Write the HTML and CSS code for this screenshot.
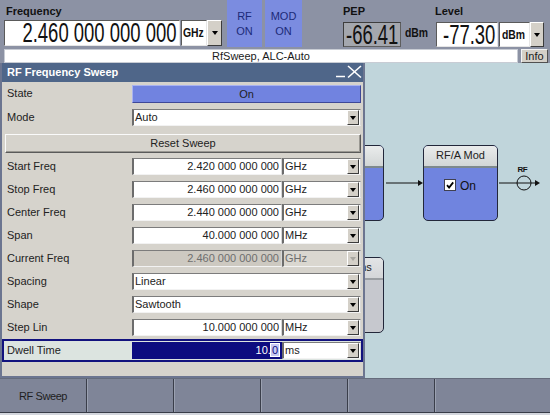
FILE: index.html
```html
<!DOCTYPE html>
<html lang="en">
<head>
<meta charset="utf-8">
<title>RF Frequency Sweep</title>
<link rel="stylesheet" href="styles.css">
</head>
<body>
<div class="screen">
  <div class="head">
    <div class="toprow">
      <div class="grp g-freq">
        <div class="glabel">Frequency</div>
        <div class="entry e-freq">
          <div class="bigbox b-freq"><span class="big">2.460 000 000 000</span></div>
          <div class="ubox u-freq"><span class="cond">GHz</span></div>
          <div class="ddbtn"><i class="tri"></i></div>
        </div>
      </div>
      <div class="onoff rf">RF<br>ON</div>
      <div class="onoff mod">MOD<br>ON</div>
      <div class="grp g-pep">
        <div class="glabel tall">PEP</div>
        <div class="entry e-lvl">
          <div class="bigbox b-pep"><span class="big">-66.41</span></div>
          <span class="cond unit-txt">dBm</span>
        </div>
      </div>
      <div class="grp g-level">
        <div class="glabel tall">Level</div>
        <div class="entry e-lvl">
          <div class="bigbox b-level"><span class="big">-77.30</span></div>
          <div class="ubox u-level"><span class="cond">dBm</span></div>
          <div class="ddbtn"><i class="tri"></i></div>
        </div>
      </div>
    </div>
    <div class="statusrow">
      <div class="statbox">RfSweep, ALC-Auto</div>
      <div class="infobtn">Info</div>
    </div>
  </div>

  <div class="main">
    <div class="diagram">
      <svg class="wires" width="550" height="315" viewBox="0 0 550 315">
        <line x1="386" y1="120" x2="419" y2="120" stroke="#111" stroke-width="1"/>
        <polygon points="418,117 423,120 418,123" fill="#111"/>
        <line x1="499" y1="120" x2="536" y2="120" stroke="#111" stroke-width="1"/>
        <polygon points="535,117 540,120 535,123" fill="#111"/>
        <circle cx="524" cy="120" r="7" fill="none" stroke="#111" stroke-width="1"/>
        <text x="517.5" y="108.5" font-family="Liberation Sans, Arial, sans-serif" font-size="8" font-weight="bold" letter-spacing="-0.6" fill="#111">RF</text>
      </svg>
      <div class="blk blk-a">
        <div class="bhead"></div>
        <div class="bbody"></div>
      </div>
      <div class="blk blk-mod">
        <div class="bhead">RF/A Mod</div>
        <div class="bbody">
          <span class="chk"><svg width="10" height="10" viewBox="0 0 10 10"><path d="M2 5.2 L4.1 7.6 L8.2 2.4" fill="none" stroke="#000" stroke-width="1.8"/></svg></span>
          <span>On</span>
        </div>
      </div>
      <div class="blk blk-b">
        <div class="bhead">Mod Gens</div>
        <div class="bbody"></div>
      </div>
    </div>

    <div class="dialog">
      <div class="dtitle">
        <span>RF Frequency Sweep</span>
        <svg class="wctl" width="28" height="19" viewBox="0 0 28 19">
          <line x1="1" y1="13.5" x2="10" y2="13.5" stroke="#fff" stroke-width="1.5"/>
          <line x1="13" y1="3" x2="26" y2="14.5" stroke="#fff" stroke-width="1.6"/>
          <line x1="26" y1="3" x2="13" y2="14.5" stroke="#fff" stroke-width="1.6"/>
        </svg>
      </div>
      <div class="drows">
        <div class="row r-state"><div class="rl">State</div><div class="onbtn">On</div></div>
        <div class="row"><div class="rl">Mode</div><div class="sel"><span class="st">Auto</span><span class="dd"><i class="tri"></i></span></div></div>
        <div class="row r-reset"><div class="resetbtn">Reset Sweep</div></div>
        <div class="row"><div class="rl">Start Freq</div><div class="fld"><div class="val">2.420 000 000 000</div><div class="usel"><span class="st">GHz</span><span class="dd"><i class="tri"></i></span></div></div></div>
        <div class="row"><div class="rl">Stop Freq</div><div class="fld"><div class="val">2.460 000 000 000</div><div class="usel"><span class="st">GHz</span><span class="dd"><i class="tri"></i></span></div></div></div>
        <div class="row"><div class="rl">Center Freq</div><div class="fld"><div class="val">2.440 000 000 000</div><div class="usel"><span class="st">GHz</span><span class="dd"><i class="tri"></i></span></div></div></div>
        <div class="row"><div class="rl">Span</div><div class="fld"><div class="val">40.000 000 000</div><div class="usel"><span class="st">MHz</span><span class="dd"><i class="tri"></i></span></div></div></div>
        <div class="row"><div class="rl">Current Freq</div><div class="fld dis"><div class="val">2.460 000 000 000</div><div class="usel"><span class="st">GHz</span><span class="dd"><i class="tri"></i></span></div></div></div>
        <div class="row"><div class="rl">Spacing</div><div class="sel"><span class="st">Linear</span><span class="dd"><i class="tri"></i></span></div></div>
        <div class="row"><div class="rl">Shape</div><div class="sel"><span class="st">Sawtooth</span><span class="dd"><i class="tri"></i></span></div></div>
        <div class="row"><div class="rl">Step Lin</div><div class="fld"><div class="val">10.000 000 000</div><div class="usel"><span class="st">MHz</span><span class="dd"><i class="tri"></i></span></div></div></div>
        <div class="row r-active"><div class="rl">Dwell Time</div><div class="fld"><div class="val act">10.<span class="cur">0</span></div><div class="usel"><span class="st">ms</span><span class="dd"><i class="tri"></i></span></div></div></div>
      </div>
    </div>
  </div>

  <div class="softkeys">
    <div class="sk">RF Sweep</div>
    <div class="sk"></div>
    <div class="sk"></div>
    <div class="sk"></div>
    <div class="sk"></div>
    <div class="sk"></div>
  </div>
</div>
</body>
</html>
```

FILE: styles.css
```css
* { box-sizing: border-box; margin: 0; padding: 0; }
html, body { width: 550px; height: 415px; overflow: hidden; background: #d3d6dd; }
body { font-family: "Liberation Sans", Arial, sans-serif; color: #1e1e1e; }

.screen { width: 550px; height: 413px; display: flex; flex-direction: column; }

/* ---------- header ---------- */
.head { height: 63px; background: #8c92a4; display: flex; flex-direction: column; }
.toprow { height: 49px; display: flex; align-items: flex-start; }
.grp { display: flex; flex-direction: column; }
.g-freq { margin-left: 4px; width: 218px; }
.g-pep { margin-left: 41px; width: 92px; }
.g-level { width: 110px; }
.glabel { height: 20px; padding-top: 5px; padding-left: 2px; font-size: 11px; font-weight: bold; line-height: 13px; color: #111; }
.glabel.tall { height: 22px; padding-left: 0; }

.entry { display: flex; align-items: stretch; }
.e-freq { height: 26px; }
.e-lvl { height: 25px; }

.bigbox { display: flex; justify-content: flex-end; align-items: flex-start; overflow: visible; padding-right: 2px;
  background: #fff; border: 1px solid; border-color: #5a5a5a #e6e6e6 #e6e6e6 #5a5a5a; }
.b-freq { width: 176px; }
.b-pep { width: 58px; background: #a4a7ae; border-color: #3e3e3e #5e5e5e #5e5e5e #3e3e3e; }
.b-level { width: 62px; margin-left: 1px; }
.big { flex: none; white-space: nowrap; font-size: 28px; line-height: 24px; color: #111;
  transform: scaleX(0.66); transform-origin: 100% 50%; }

.ubox { background: #fff; border: 1px solid; border-color: #5a5a5a #e6e6e6 #e6e6e6 #5a5a5a; margin-left: 1px; overflow: visible; }
.u-freq { width: 26px; padding-left: 1px; }
.u-level { width: 31px; padding-left: 2px; }
.cond { display: inline-block; font-size: 13px; font-weight: bold; line-height: 24px; color: #111;
  transform: scaleX(0.8); transform-origin: 0 50%; white-space: nowrap; }
.u-level .cond { line-height: 23px; }
.unit-txt { margin-left: 4px; line-height: 21px; }

.ddbtn { width: 15px; background: #d4d0c8; border: 1px solid; border-color: #fff #3c3c3c #3c3c3c #fff;
  display: flex; align-items: center; justify-content: center; }
.g-level .ddbtn { width: 14px; }
.tri { display: block; width: 0; height: 0; border-left: 3px solid transparent; border-right: 3px solid transparent; border-top: 4px solid #000; }

.onoff { height: 47px; background: #7b8ce0; color: #1c2a78; font-size: 11px; line-height: 15px; text-align: center; padding-top: 9px; }
.rf { margin-left: 5px; width: 35px; }
.mod { margin-left: 3px; width: 37px; }

.statusrow { height: 14px; display: flex; padding-left: 4px; }
.statbox { width: 514px; background: #fff; border: 1px solid #c8ccd4; font-size: 11px; line-height: 12px; text-align: center; color: #1a1a1a; }
.infobtn { margin-left: 3px; width: 27px; background: #d4d0c8; border: 1px solid; border-color: #f4f4f4 #505050 #505050 #f4f4f4;
  font-size: 11px; line-height: 12px; text-align: center; color: #1a1a1a; }

/* ---------- main / diagram ---------- */
.main { position: relative; height: 315px; }
.diagram { position: relative; height: 100%; background: #c0d5db; }
.wires { position: absolute; left: 0; top: 0; }
.blk { position: absolute; width: 75px; height: 76px; border: 1.5px solid #22273a; border-radius: 5px; overflow: hidden;
  background: #7084df; display: flex; flex-direction: column; }
.blk-a { left: 309px; top: 82px; }
.blk-mod { left: 423px; top: 82px; }
.blk-b { left: 309px; top: 194px; background: #c6c8ce; }
.bhead { height: 22px; flex: none; background: linear-gradient(#eaecec, #d2d6d6); border-bottom: 2px solid #7e898c;
  font-size: 11px; line-height: 19px; text-align: center; color: #222; white-space: nowrap; }
.blk-b .bhead { background: linear-gradient(#e2e4e6, #d4d6d8); border-bottom-color: #9a9ea2; }
.bbody { flex: 1; display: flex; align-items: flex-start; justify-content: center; gap: 5px; padding-top: 12px; font-size: 12px; line-height: 12px; color: #111; }
.chk { display: block; width: 10px; height: 10px; background: #fff; box-shadow: 0 0 0 1px #404050; }
.chk svg { display: block; }

/* ---------- dialog ---------- */
.dialog { position: absolute; left: 0; top: 0; width: 365px; height: 315px; background: #d6d3cc;
  border: 2px solid #6c7590; border-top: 0; display: flex; flex-direction: column; }
.dtitle { height: 19px; background: #4f6689; color: #fff; font-size: 11px; font-weight: bold; line-height: 19px;
  padding-left: 5px; display: flex; justify-content: space-between; }
.wctl { display: block; margin-right: 0; }
.drows { padding-top: 1px; display: flex; flex-direction: column; }

.row { display: flex; height: 23px; padding-top: 3px; }
.rl { width: 130px; padding-left: 5px; font-size: 11px; line-height: 17px; color: #222; white-space: nowrap; }
.r-state { padding-top: 2px; }
.onbtn { width: 229px; height: 18px; background: #7183e0; border: 1px solid; border-color: #a9b3f0 #3e4898 #3e4898 #a9b3f0;
  text-align: center; font-size: 11px; line-height: 16px; color: #1e1e1e; }
.r-reset { height: 26px; padding-top: 5px; padding-left: 3px; }
.resetbtn { width: 356px; height: 19px; background: #d6d3cc; border: 1px solid; border-color: #fafafa #5a5a5a #5a5a5a #fafafa;
  box-shadow: inset -1px -1px 0 #9a9892; text-align: center; font-size: 11px; line-height: 17px; color: #222; }

.fld { display: flex; width: 229px; height: 17px; }
.val { width: 150px; background: #fff; border-style: solid; border-width: 1px 1px 1px 2px; border-color: #7c7c7c #d8d8d8 #f2f2f2 #6c6c6c;
  text-align: right; padding-right: 2px; font-size: 11px; line-height: 15px; color: #222; white-space: nowrap; overflow: hidden; }
.usel, .sel { display: flex; align-items: stretch; background: #fff; border-style: solid; border-width: 1px 1px 1px 2px;
  border-color: #7c7c7c #d8d8d8 #f2f2f2 #6c6c6c; font-size: 11px; line-height: 15px; color: #222; }
.usel { width: 79px; padding-left: 1px; }
.sel { width: 229px; height: 17px; padding-left: 1px; }
.st { flex: 1; white-space: nowrap; }
.dd { width: 12px; margin-right: 1px; background: #d4d0c8; border: 1px solid; border-color: #fff #3c3c3c #3c3c3c #fff;
  display: flex; align-items: center; justify-content: center; }

.dis .val { background: #cdc9c1; color: #6e6e6e; }
.dis .usel { background: #dad7d0; color: #6e6e6e; }
.dis .tri { border-top-color: #a8a6a0; }

.r-active { border: 2px solid #12127e; padding-top: 1px; background: #dce4e0; }
.r-active .rl { width: 128px; padding-left: 3px; }
.val.act { background: #0c0c80; color: #fff; border-color: #0c0c80; }
.cur { background: #c6c8f2; color: #0c0c80; box-shadow: 0 0 0 1px #fff; padding: 0 1px; }

/* ---------- softkeys ---------- */
.softkeys { display: flex; height: 35px; background: #7f8598; border-top: 1px solid #666c7c; border-bottom: 1px solid #383c48; }
.sk { width: 87px; flex: none; border-right: 1px solid #3a3e4a; box-shadow: inset 1px 0 0 #9ba1b1;
  display: flex; align-items: center; justify-content: center; font-size: 11px; letter-spacing: -0.4px; color: #1e1e1e; }
.sk:first-child { box-shadow: none; }
.sk:last-child { flex: 1; border-right: 0; }
```
